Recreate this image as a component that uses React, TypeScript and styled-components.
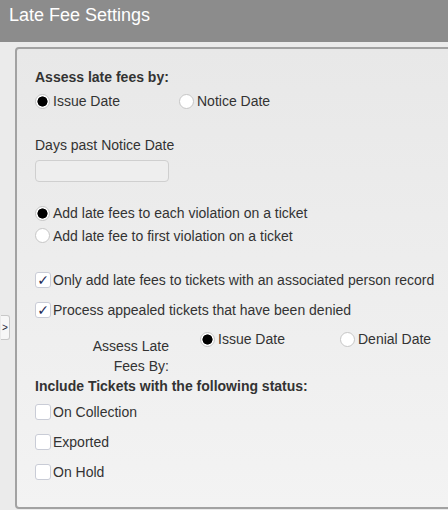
import styled, { createGlobalStyle } from 'styled-components';

const GlobalStyle = createGlobalStyle`
  html, body {
    margin: 0;
    padding: 0;
    background: #ebebeb;
    font-family: "Liberation Sans", Arial, sans-serif;
    color: #333;
    overflow: hidden;
  }
`;

const Page = styled.div`
  position: relative;
  width: 448px;
  height: 510px;
  overflow: hidden;
  background: #ebebeb;
`;

const Header = styled.div`
  height: 42px;
  box-sizing: border-box;
  padding: 2px 9px;
  background: #8c8c8c;
  color: #fff;
  font-size: 18px;
  line-height: 26px;
`;

const Panel = styled.div`
  margin: 5px -20px 0 15px;
  height: 462px;
  box-sizing: border-box;
  padding: 19px 0 0 18px;
  border: 2px solid #a2a2a2;
  border-radius: 4px;
  background: linear-gradient(#e8e8e8, #f3f3f3);
`;

const SideTab = styled.div`
  position: absolute;
  left: 1px;
  top: 315px;
  width: 9px;
  height: 25px;
  box-sizing: border-box;
  border: 1px solid #c8c8c8;
  border-left: none;
  border-radius: 0 3px 3px 0;
  background: #f7f7f7;
  font-size: 10px;
  line-height: 23px;
  color: #223;
  text-align: center;
`;

const Heading = styled.div<{ $top?: number }>`
  font-weight: bold;
  font-size: 14px;
  line-height: 18px;
  margin-top: ${p => p.$top ?? 0}px;
`;

const Label = styled.div<{ $top?: number }>`
  font-size: 14px;
  line-height: 18px;
  margin-top: ${p => p.$top ?? 0}px;
`;

const TextBox = styled.div`
  margin-top: 6px;
  width: 134px;
  height: 22px;
  box-sizing: border-box;
  border: 1px solid #cfcfcf;
  border-radius: 4px;
  background: #eeeeee;
`;

const Row = styled.div<{ $top?: number; $h?: number }>`
  display: flex;
  align-items: center;
  margin-top: ${p => p.$top ?? 0}px;
  height: ${p => p.$h ?? 22}px;
`;

const Choice = styled.div<{ $w?: number }>`
  display: flex;
  align-items: center;
  font-size: 14px;
  ${p => (p.$w ? `width: ${p.$w}px;` : '')}
`;

const RadioCircle = styled.span<{ $on?: boolean }>`
  width: 15px;
  height: 15px;
  box-sizing: border-box;
  border-radius: 50%;
  border: 1px solid #c6c6c6;
  background: ${p => (p.$on ? 'radial-gradient(circle, #000 0 4.8px, #fff 5.3px)' : '#fff')};
  margin-right: 3px;
  flex: none;
`;

const CheckSquare = styled.span`
  width: 16px;
  height: 16px;
  box-sizing: border-box;
  border: 1px solid #c9ccd6;
  border-radius: 3px;
  background: #fff;
  margin-right: 2px;
  flex: none;
  display: flex;
  align-items: center;
  justify-content: center;
  font-size: 14px;
  line-height: 14px;
  color: #1f2a55;
  font-family: "DejaVu Sans", sans-serif;
`;

const SubRow = styled.div`
  display: flex;
  margin-top: 8px;
`;

const SubLabel = styled.div`
  width: 134px;
  margin-top: 7px;
  text-align: right;
  font-size: 14px;
  line-height: 20px;
`;

const SubChoices = styled.div`
  display: flex;
  align-items: center;
  height: 20px;
  margin-left: 31px;
`;

const Radio = ({ on, label, w }: { on?: boolean; label: string; w?: number }) => (
  <Choice $w={w}>
    <RadioCircle $on={on} />
    {label}
  </Choice>
);

const Check = ({ on, label }: { on?: boolean; label: string }) => (
  <Choice>
    <CheckSquare>{on ? '✓' : ''}</CheckSquare>
    {label}
  </Choice>
);

export default function App() {
  return (
    <Page>
      <GlobalStyle />
      <Header>Late Fee Settings</Header>
      <Panel>
        <Heading>Assess late fees by:</Heading>
        <Row $top={4}>
          <Radio on label="Issue Date" w={144} />
          <Radio label="Notice Date" />
        </Row>
        <Label $top={24}>Days past Notice Date</Label>
        <TextBox />
        <Row $top={20}>
          <Radio on label="Add late fees to each violation on a ticket" />
        </Row>
        <Row $h={23}>
          <Radio label="Add late fee to first violation on a ticket" />
        </Row>
        <Row $top={22}>
          <Check on label="Only add late fees to tickets with an associated person record" />
        </Row>
        <Row $top={8}>
          <Check on label="Process appealed tickets that have been denied" />
        </Row>
        <SubRow>
          <SubLabel>
            Assess Late
            <br />
            Fees By:
          </SubLabel>
          <SubChoices>
            <Radio on label="Issue Date" w={140} />
            <Radio label="Denial Date" />
          </SubChoices>
        </SubRow>
        <Heading $top={1}>Include Tickets with the following status:</Heading>
        <Row $top={6}>
          <Check label="On Collection" />
        </Row>
        <Row $top={8}>
          <Check label="Exported" />
        </Row>
        <Row $top={8}>
          <Check label="On Hold" />
        </Row>
      </Panel>
      <SideTab>&gt;</SideTab>
    </Page>
  );
}
